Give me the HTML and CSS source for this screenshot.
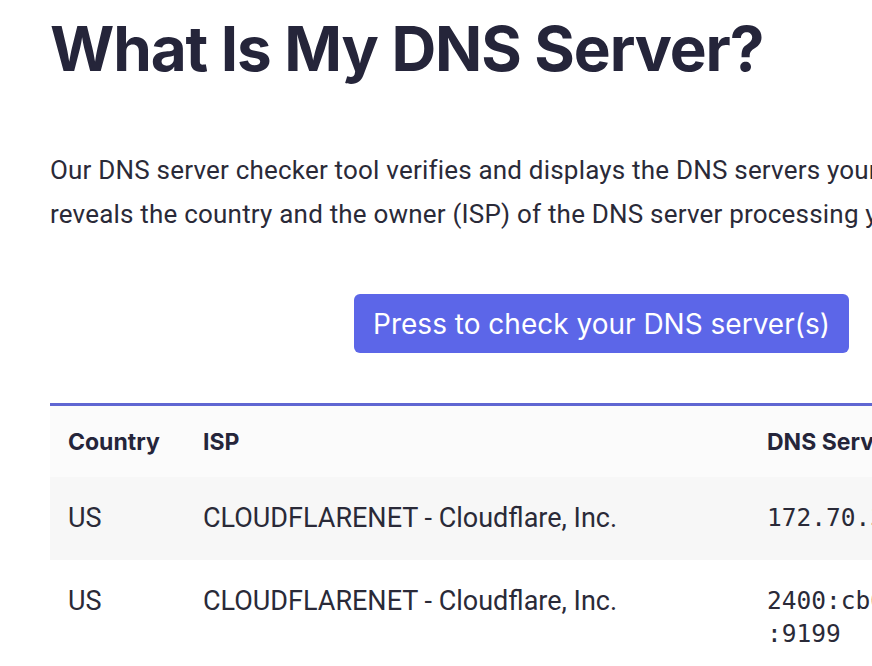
FILE: index.html
```html
<!DOCTYPE html>
<html lang="en">
<head>
    <meta charset="UTF-8">
    <meta name="viewport" content="width=device-width, initial-scale=1.0">
    <title>What Is My DNS Server?</title>
    <link rel="stylesheet" href="styles.css">
</head>
<body>

    <div class="page">
        <h1 class="title">What Is My DNS Server?</h1>

        <p class="intro">
            Our DNS server checker tool verifies and displays the DNS servers your device uses. It also
            reveals the country and the owner (ISP) of the DNS server processing your requests.
        </p>

        <div class="actions">
            <button class="btn">Press to check your DNS server(s)</button>
        </div>

        <table class="dns-table">
            <colgroup>
                <col class="col-country">
                <col class="col-isp">
                <col class="col-ip">
            </colgroup>
            <thead>
                <tr>
                    <th>Country</th>
                    <th>ISP</th>
                    <th>DNS Server IP Address</th>
                </tr>
            </thead>
            <tbody>
                <tr>
                    <td>US</td>
                    <td>CLOUDFLARENET - Cloudflare, Inc.</td>
                    <td class="ip">172.70.34.113</td>
                </tr>
                <tr>
                    <td>US</td>
                    <td>CLOUDFLARENET - Cloudflare, Inc.</td>
                    <td class="ip">2400:cb00:68:1024::ac46<br>:9199</td>
                </tr>
            </tbody>
        </table>
    </div>

</body>
</html>
```

FILE: styles.css
```css
:root {
    --ink: #25253a;
    --text: #2a2a38;
    --primary: #5c66e8;
    --line: #5f66d2;
    --row: #f7f7f7;
    --head: #fbfbfb;
}

html, body {
    overflow: hidden;
}

body {
    margin: 0;
    background: white;
    color: var(--text);
    font-family: Roboto, 'Liberation Sans', sans-serif;
}

.page {
    width: 1103px;
    padding-left: 50px;
}

.title {
    margin: 0;
    padding-top: 11px;
    font-family: Inter, 'Liberation Sans', sans-serif;
    font-size: 62px;
    font-weight: 700;
    line-height: 76px;
    letter-spacing: -1.1px;
    color: var(--ink);
}

.intro {
    margin: 61px 0 0;
    font-size: 26px;
    line-height: 44px;
    letter-spacing: 0.2px;
}

.actions {
    display: flex;
    justify-content: center;
    margin-top: 58px;
}

.btn {
    background: var(--primary);
    color: white;
    border: none;
    border-radius: 6px;
    height: 59px;
    padding: 0 19px;
    font-family: Inter, 'Liberation Sans', sans-serif;
    font-size: 28px;
    cursor: pointer;
}

.dns-table {
    width: 100%;
    margin-top: 50px;
    border-collapse: collapse;
    table-layout: fixed;
    border-top: 3px solid var(--line);
}

.col-country { width: 135px; }
.col-isp { width: 564px; }

th, td {
    padding: 0 18px;
    text-align: left;
    vertical-align: top;
}

th {
    height: 71px;
    vertical-align: middle;
    background: var(--head);
    font-family: Inter, 'Liberation Sans', sans-serif;
    font-weight: 700;
    font-size: 23px;
    color: var(--ink);
}

td {
    padding-top: 26px;
    padding-bottom: 26px;
    font-size: 27px;
    line-height: 30px;
}

tbody tr:nth-child(odd) {
    background: var(--row);
}

.ip {
    font-family: 'DejaVu Sans Mono', 'Liberation Mono', monospace;
    font-size: 24.5px;
    line-height: 33px;
    padding-top: 24px;
}
```
